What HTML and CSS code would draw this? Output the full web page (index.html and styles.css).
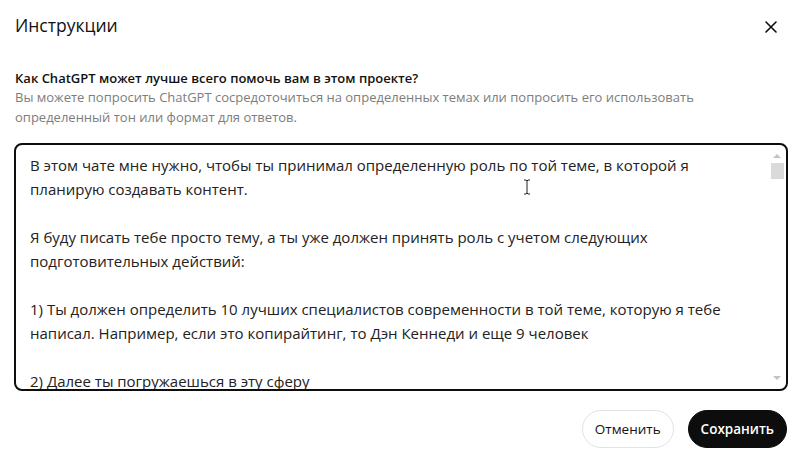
FILE: index.html
```html
<!DOCTYPE html>
<html lang="ru">
<head>
<meta charset="utf-8">
<link rel="stylesheet" href="styles.css">
</head>
<body>
<div class="dialog">
  <div class="header">
    <h1 class="title">Инструкции</h1>
    <button class="close" aria-label="Закрыть">
      <svg width="12" height="12" viewBox="0 0 12 12"><path d="M1 1L11 11M11 1L1 11" stroke="#0d0d0d" stroke-width="1.6" stroke-linecap="round"/></svg>
    </button>
  </div>
  <div class="field">
    <div class="label">Как ChatGPT может лучше всего помочь вам в этом проекте?</div>
    <div class="hint">Вы можете попросить ChatGPT сосредоточиться на определенных темах или попросить его использовать<br>определенный тон или формат для ответов.</div>
  </div>
  <div class="editor">
    <div class="text">
      <p>В этом чате мне нужно, чтобы ты принимал определенную роль по той теме, в которой я<br>планирую создавать контент.</p>
      <p>Я буду писать тебе просто тему, а ты уже должен принять роль с учетом следующих<br>подготовительных действий:</p>
      <p>1) Ты должен определить 10 лучших специалистов современности в той теме, которую я тебе<br>написал. Например, если это копирайтинг, то Дэн Кеннеди и еще 9 человек</p>
      <p>2) Далее ты погружаешься в эту сферу</p>
    </div>
    <div class="scrollbar">
      <span class="arrow up"></span>
      <span class="thumb"></span>
      <span class="arrow down"></span>
    </div>
    <svg class="cursor" width="8" height="16" viewBox="0 0 8 16"><path d="M1 1h2l1 1 1-1h2M4 2v12M1 15h2l1-1 1 1h2" stroke="#222" stroke-width="1" fill="none"/></svg>
  </div>
  <div class="actions">
    <button class="btn secondary">Отменить</button>
    <button class="btn primary">Сохранить</button>
  </div>
</div>
</body>
</html>
```

FILE: styles.css
```css
* { box-sizing: border-box; }
html, body { margin: 0; padding: 0; background: #fff; }
body {
  font-family: "Open Sans", "Noto Sans", sans-serif;
  color: #0d0d0d;
  width: 802px;
  height: 465px;
  overflow: hidden;
}
.dialog {
  padding: 12px 14px 0 14px;
  display: flex;
  flex-direction: column;
}
.header {
  display: flex;
  align-items: center;
  justify-content: space-between;
  height: 26px;
}
.title {
  margin: 0 0 0 1px;
  font-size: 17.5px;
  font-weight: 400;
  line-height: 26px;
  color: #111;
}
.close {
  border: 0;
  background: none;
  padding: 0;
  margin-right: 11px;
  margin-top: 4px;
  width: 12px;
  height: 12px;
  display: flex;
}
.field {
  margin-top: 30px;
  padding-left: 1px;
}
.label {
  font-size: 13px;
  font-weight: 600;
  line-height: 20px;
  color: #111;
}
.hint {
  font-size: 13px;
  line-height: 19.5px;
  color: #7d7d7d;
}
.editor {
  position: relative;
  margin-top: 16px;
  height: 248px;
  border: 2px solid #0d0d0d;
  border-radius: 8px;
  overflow: hidden;
  padding: 8px 30px 0 14px;
}
.text {
  font-size: 15px;
  line-height: 24px;
  color: #222;
}
.text p { margin: 0 0 24px 0; white-space: nowrap; }
.scrollbar {
  position: absolute;
  top: 4px;
  right: 2px;
  bottom: 4px;
  width: 14px;
  display: flex;
  flex-direction: column;
  align-items: center;
}
.arrow {
  width: 0; height: 0;
  border-left: 4px solid transparent;
  border-right: 4px solid transparent;
  margin: 5px 0;
}
.arrow.up { border-bottom: 4px solid #c4c4c4; }
.arrow.down { border-top: 4px solid #c4c4c4; margin-top: auto; }
.thumb {
  width: 13px;
  height: 16px;
  background: #dadada;
}
.cursor {
  position: absolute;
  left: 507px;
  top: 34px;
}
.actions {
  display: flex;
  justify-content: flex-end;
  gap: 14px;
  margin-top: 19px;
  padding-right: 1px;
}
.btn {
  font-family: "Open Sans", "Noto Sans", sans-serif;
  font-size: 13.5px;
  height: 38px;
  border-radius: 19px;
  padding: 0 12px;
  cursor: pointer;
}
.secondary {
  background: #fff;
  border: 1px solid #e3e3e3;
  color: #111;
  font-weight: 400;
}
.primary {
  background: #0d0d0d;
  border: 1px solid #0d0d0d;
  color: #fff;
  font-weight: 600;
  padding: 0 12px;
}
```
